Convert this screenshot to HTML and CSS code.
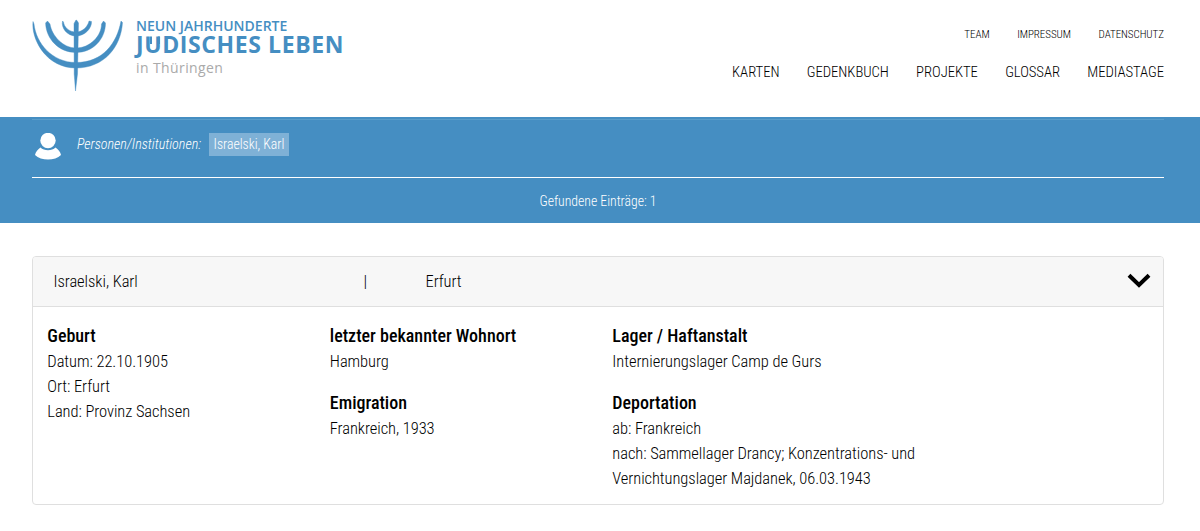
FILE: index.html
```html
<!DOCTYPE html>
<html lang="de">
<head>
<meta charset="utf-8">
<title>Jüdisches Leben in Thüringen</title>
<link rel="stylesheet" href="styles.css">
</head>
<body>
<header class="site-header">
  <a class="logo">
    <svg class="menorah" width="92" height="73" viewBox="0 0 92 73" fill="#458ec2" stroke="#458ec2" stroke-width=".4">
      <path d="M1 2.500C-1 20 14 49 44 49C72 49 89 28 90.500 3.500L89 2C85 24 71 43.500 44 43.500C20 43.500 4 24 2 5Z"/>
      <path d="M15.500 2L13.600 4C14 20 27 33.500 44 33.500C61 33.500 73.500 20 73.500 4L71.500 2L69.500 5C69.500 17 58 29 44 29C31 29 20 17 18 5Z"/>
      <path d="M30.500 2C29 9 35 17 44 17C53 17 60 9 59.500 2.500L57 2C56 7 51 13 44 13S32 8 31.500 3Z"/>
      <path d="M44 1L42 4.500L42.200 55L43.500 72L45.500 55L46.500 4L45 1.500Z"/>
    </svg>
    <span class="logo-text">
      <span class="logo-top">NEUN JAHRHUNDERTE</span>
      <span class="logo-main">J<span class="logo-umlaut">Ü</span>DISCHES LEBEN</span>
      <span class="logo-sub">in Thüringen</span>
    </span>
  </a>
  <div class="navs">
    <nav class="nav-small"><a>TEAM</a><a>IMPRESSUM</a><a>DATENSCHUTZ</a></nav>
    <nav class="nav-main"><a>KARTEN</a><a>GEDENKBUCH</a><a>PROJEKTE</a><a>GLOSSAR</a><a>MEDIASTAGE</a></nav>
  </div>
</header>
<section class="filter">
  <div class="filter-row">
    <svg class="person" width="26" height="28" viewBox="0 0 26 28" fill="#fff"><ellipse cx="13" cy="7.500" rx="7.700" ry="7.700"/><path d="M5.5 14.500C9 18 17 18 20.500 14.500C23 16 25.500 19 26 22C20 28 6 28 0 22C.5 19 3 16 5.500 14.500Z"/></svg>
    <em class="filter-label">Personen/Institutionen:</em>
    <span class="tag">Israelski, Karl</span>
  </div>
  <div class="count">Gefundene Einträge: 1</div>
</section>
<main class="card">
  <div class="card-head">
    <span class="name">Israelski, Karl</span><span class="sep">|</span><span class="place">Erfurt</span>
    <svg class="chevron" width="24" height="15" viewBox="0 0 24 15"><path d="M2 2.200L12 12L22 2.200" fill="none" stroke="#000" stroke-width="4"/></svg>
  </div>
  <div class="card-body">
    <div class="col">
      <section class="entry"><h3>Geburt</h3><p>Datum: 22.10.1905</p><p>Ort: Erfurt</p><p>Land: Provinz Sachsen</p></section>
    </div>
    <div class="col">
      <section class="entry"><h3>letzter bekannter Wohnort</h3><p>Hamburg</p></section>
      <section class="entry"><h3>Emigration</h3><p>Frankreich, 1933</p></section>
    </div>
    <div class="col wide">
      <section class="entry"><h3>Lager / Haftanstalt</h3><p>Internierungslager Camp de Gurs</p></section>
      <section class="entry"><h3>Deportation</h3><p>ab: Frankreich</p><p>nach: Sammellager Drancy; Konzentrations- und<br>Vernichtungslager Majdanek, 06.03.1943</p></section>
    </div>
  </div>
</main>
</body>
</html>
```
FILE: styles.css
```css
* { box-sizing: border-box; }
body { margin: 0; background: #fff; color: #000; font: 350 16.5px/24.75px "Roboto Condensed", Roboto, sans-serif; font-stretch: 75%; letter-spacing: -0.06px; }
h3, p { margin: 0; }
.site-header { height: 117px; padding: 19px 36px 0 32px; display: flex; justify-content: space-between; }
.logo { display: flex; gap: 12px; }
.logo-text { display: flex; flex-direction: column; font-family: "Open Sans", sans-serif; font-stretch: normal; letter-spacing: 0; color: #458ec2; white-space: nowrap; }
.logo-top { font-size: 14px; line-height: 13px; font-weight: 600; }
.logo-main { font-size: 23px; line-height: 25px; font-weight: 700; letter-spacing: 0.6px; }
/* The dots of the Ü sit inside the letter, level with the cap line. */
.logo-umlaut { display: inline-block; position: relative; clip-path: inset(4.5px 0 0 0); }
.logo-umlaut::after { content: ""; position: absolute; left: 6px; top: 4px; width: 6px; height: 8px; border: solid #458ec2; border-width: 0 2px; }
.logo-sub { font-size: 14px; line-height: 22px; font-weight: 500; letter-spacing: 0.4px; color: #aaa; }
.navs { display: flex; flex-direction: column; align-items: flex-end; }
.nav-small, .nav-main { display: flex; }
.nav-small { gap: 27.5px; font-size: 11px; line-height: 16px; padding-top: 8px; letter-spacing: -0.04px; }
.nav-main { gap: 27.3px; font-size: 14.7px; line-height: 22px; padding-top: 18px; letter-spacing: -0.04px; }
.filter { height: 106px; background: #458ec2; color: #fff; padding: 2px 36px 0 32px; font-size: 13.8px; letter-spacing: -0.03px; }
.filter-row { height: 59px; border-top: 1px solid #5a9ecb; border-bottom: 1px solid #fff; display: flex; align-items: flex-start; padding: 13px 0 0 3px; }
.filter-label { margin-left: 16px; line-height: 23px; font-size: 14.1px; letter-spacing: 0; }
.tag { margin-left: 8px; padding: 0 4.5px; line-height: 23px; background: #7fb1d6; }
.count { text-align: center; line-height: 46px; }
.card { margin: 33px 36px 0 32px; height: 249px; border: 1px solid #dfdfdf; border-radius: 4px; overflow: hidden; }
.card-head { height: 50px; padding: 1px 12.5px 0 20.5px; background: #f7f7f7; border-bottom: 1px solid #dfdfdf; display: flex; align-items: center; }
.name { width: 310px; }
.sep { width: 62px; }
.chevron { margin: -4px 0 0 auto; }
.card-body { display: grid; grid-template-columns: 1fr 1fr 2fr; padding-top: 16px; }
.col { padding-left: 14.3px; }
.entry { margin-bottom: 14.5px; }
.entry h3 { font-size: 18px; line-height: 26px; margin-bottom: 1.4px; font-weight: 500; letter-spacing: 0; }
```
